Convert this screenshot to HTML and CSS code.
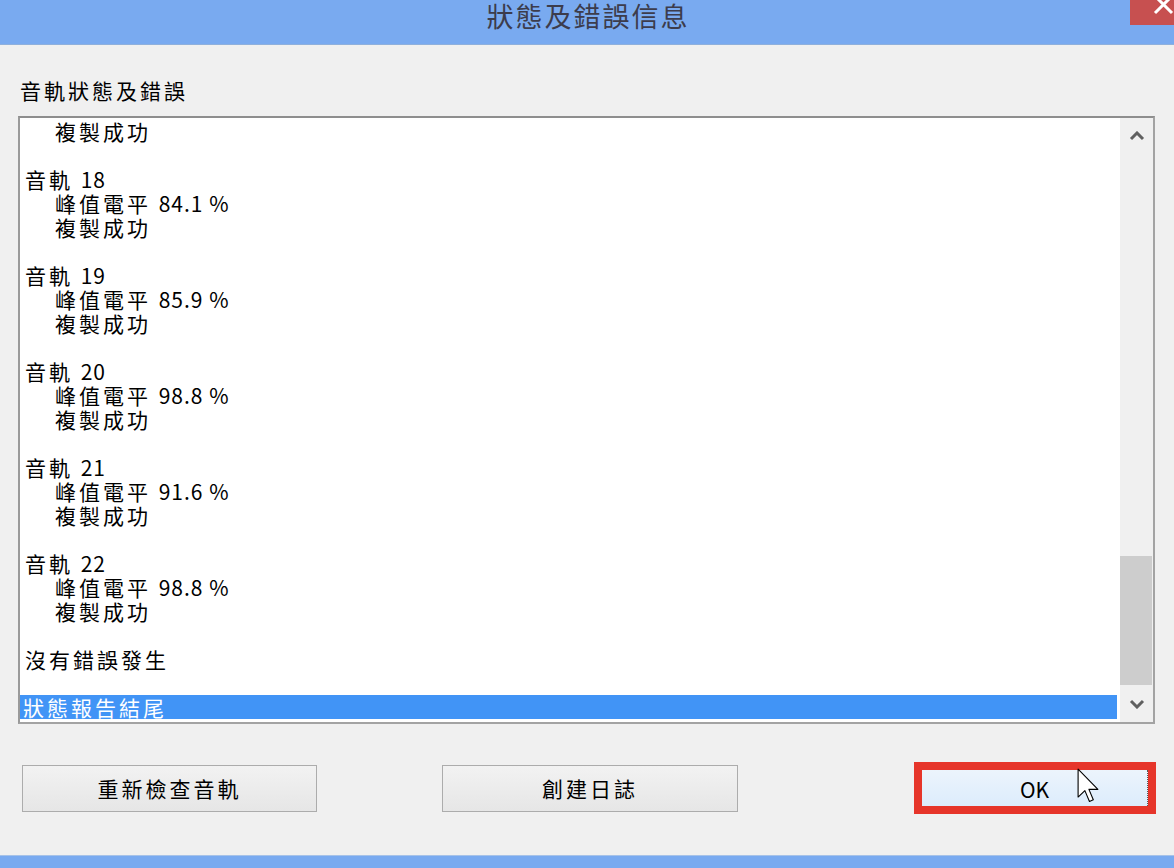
FILE: index.html
```html
<!DOCTYPE html>
<html lang="zh-Hant">
<head>
  <meta charset="UTF-8">
  <title>狀態及錯誤信息</title>
  <link rel="stylesheet" href="styles.css">
</head>
<body>
  <div class="title-bar">
    <span class="title-text">狀態及錯誤信息</span>
    <div class="close-button">
      <svg width="44" height="25" viewBox="0 0 44 25">
        <path d="M25 -4 L42 13 M42 -4 L25 13" stroke="#fff" stroke-width="3" fill="none"/>
      </svg>
    </div>
  </div>

  <div class="content">
    <div class="group-label">音軌狀態及錯誤</div>

    <div class="list-box">
      <div class="list-lines">
        <div class="line indent">複製成功</div>
        <div class="line"></div>
        <div class="line">音軌 <span class="num">18</span></div>
        <div class="line indent">峰值電平 <span class="num">84.1 %</span></div>
        <div class="line indent">複製成功</div>
        <div class="line"></div>
        <div class="line">音軌 <span class="num">19</span></div>
        <div class="line indent">峰值電平 <span class="num">85.9 %</span></div>
        <div class="line indent">複製成功</div>
        <div class="line"></div>
        <div class="line">音軌 <span class="num">20</span></div>
        <div class="line indent">峰值電平 <span class="num">98.8 %</span></div>
        <div class="line indent">複製成功</div>
        <div class="line"></div>
        <div class="line">音軌 <span class="num">21</span></div>
        <div class="line indent">峰值電平 <span class="num">91.6 %</span></div>
        <div class="line indent">複製成功</div>
        <div class="line"></div>
        <div class="line">音軌 <span class="num">22</span></div>
        <div class="line indent">峰值電平 <span class="num">98.8 %</span></div>
        <div class="line indent">複製成功</div>
        <div class="line"></div>
        <div class="line">沒有錯誤發生</div>
        <div class="line"></div>
        <div class="line selected">狀態報告結尾</div>
      </div>
      <div class="scrollbar">
        <div class="scroll-arrow">
          <svg width="16" height="10" viewBox="0 0 16 10">
            <path d="M2 8 L8 2 L14 8" stroke="#606060" stroke-width="3" fill="none"/>
          </svg>
        </div>
        <div class="scroll-track">
          <div class="scroll-thumb"></div>
        </div>
        <div class="scroll-arrow down">
          <svg width="16" height="10" viewBox="0 0 16 10">
            <path d="M2 2 L8 8 L14 2" stroke="#606060" stroke-width="3" fill="none"/>
          </svg>
        </div>
      </div>
    </div>

    <div class="button-row">
      <button class="dlg-button">重新檢查音軌</button>
      <button class="dlg-button second">創建日誌</button>
      <div class="highlight-box">
        <button class="dlg-button ok">OK</button>
        <svg class="cursor" width="22" height="35" viewBox="0 0 12 19">
          <path d="M0.6 0.6 L0.6 15.8 L4.3 12.3 L6.8 18.2 L8.9 17.3 L6.5 11.6 L11.4 11.6 Z" fill="#fff" stroke="#000" stroke-width="0.6" stroke-linejoin="round"/>
        </svg>
      </div>
    </div>
  </div>

  <div class="bottom-strip"></div>
</body>
</html>
```

FILE: styles.css
```css
body {
  margin: 0;
  width: 1174px;
  height: 868px;
  overflow: hidden;
  background-color: #f0f0f0;
  font-family: "Noto Sans CJK TC", "Liberation Sans", sans-serif;
  color: #000;
  display: flex;
  flex-direction: column;
}

.title-bar {
  position: relative;
  height: 44px;
  background-color: #79aaf0;
  border-bottom: 1px solid #8fb0dc;
  display: flex;
  justify-content: center;
}

.title-text {
  font-size: 27px;
  letter-spacing: 2px;
  line-height: 34px;
  color: #3c3c4c;
  margin: -1px 0 0 2px;
}

.close-button {
  position: absolute;
  top: 0;
  right: 0;
  width: 44px;
  height: 25px;
  background-color: #c75050;
  overflow: hidden;
}

.close-button svg {
  display: block;
}

.content {
  display: flex;
  flex-direction: column;
  padding-top: 33px;
}

.group-label {
  margin-left: 20px;
  font-size: 21px;
  letter-spacing: 3px;
  line-height: 24px;
  height: 24px;
}

.list-box {
  margin: 14px 0 0 18px;
  width: 1133px;
  height: 604px;
  border: 2px solid #a3a3a3;
  border-top-color: #8e8e8e;
  border-left-color: #9a9a9a;
  background-color: #fff;
  display: flex;
}

.list-lines {
  flex: 1;
  padding-top: 1px;
  overflow: hidden;
}

.line {
  height: 24px;
  line-height: 24px;
  font-size: 21px;
  letter-spacing: 3px;
  padding-left: 5px;
  margin-right: 3px;
  white-space: nowrap;
}

.num {
  letter-spacing: 1px;
}

.line.indent {
  padding-left: 35px;
}

.line.selected {
  background-color: #4194f6;
  color: #fff;
  padding-left: 3px;
}

.scrollbar {
  width: 33px;
  background-color: #f0f0f0;
  display: flex;
  flex-direction: column;
}

.scroll-arrow {
  height: 36px;
  display: flex;
  align-items: center;
  justify-content: center;
}

.scroll-arrow.down {
  height: 37px;
}

.scroll-track {
  flex: 1;
  display: flex;
  flex-direction: column;
}

.scroll-thumb {
  margin: 402px 1px 0 0;
  height: 129px;
  background-color: #cdcdcd;
}

.button-row {
  display: flex;
  align-items: center;
  margin-top: 38px;
  padding-left: 22px;
  height: 52px;
}

.dlg-button {
  width: 295px;
  height: 47px;
  border: 1px solid #acacac;
  border-radius: 0;
  background: linear-gradient(#f2f2f2, #e6e6e6);
  font-family: "Noto Sans CJK TC", "Liberation Sans", sans-serif;
  font-size: 21px;
  letter-spacing: 3px;
  color: #000;
  padding: 0;
}

.dlg-button.second {
  margin-left: 125px;
  width: 296px;
}

.highlight-box {
  position: relative;
  margin-left: 176px;
  width: 226px;
  height: 36px;
  border: 8px solid #e6352a;
}

.dlg-button.ok {
  width: 226px;
  height: 36px;
  border: none;
  border-right: 1px dotted #555;
  background: linear-gradient(#ecf4fc, #dcecfc);
  letter-spacing: 0;
  padding-top: 2px;
  display: block;
}

.cursor {
  position: absolute;
  left: 155px;
  top: -2px;
}

.bottom-strip {
  margin-top: auto;
  height: 12px;
  background-color: #79aaf0;
  border-top: 1px solid #a6c2e8;
}
```
